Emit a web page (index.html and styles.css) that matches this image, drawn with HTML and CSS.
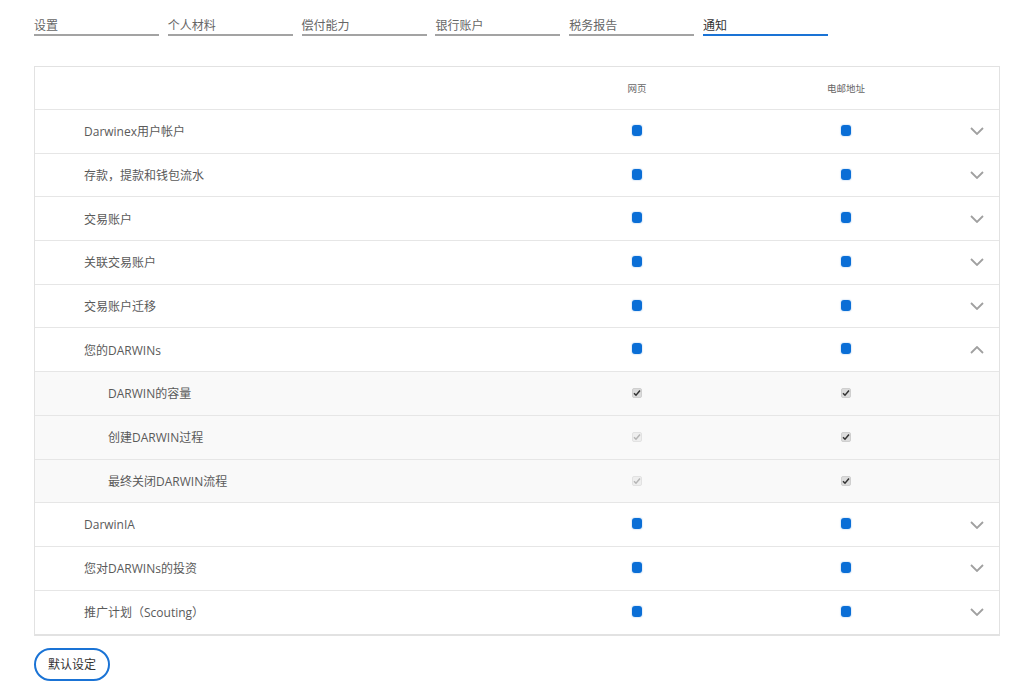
FILE: index.html
```html
<!DOCTYPE html>
<html lang="zh">
<head>
<meta charset="utf-8">
<link rel="stylesheet" href="styles.css">
</head>
<body>
<div class="page">
  <nav class="tabs">
    <div class="tab">设置</div>
    <div class="tab">个人材料</div>
    <div class="tab">偿付能力</div>
    <div class="tab">银行账户</div>
    <div class="tab">税务报告</div>
    <div class="tab active">通知</div>
  </nav>

  <div class="table">
    <div class="row head">
      <div class="label"></div>
      <div class="col c1 hlabel">网页</div>
      <div class="col c2 hlabel">电邮地址</div>
      <div class="chev"></div>
    </div>

    <div class="row">
      <div class="label">Darwinex用户帐户</div>
      <div class="col c1"><span class="dot"></span></div>
      <div class="col c2"><span class="dot"></span></div>
      <div class="chev"><svg width="14" height="8" viewBox="0 0 14 8"><polyline points="1,1 7,7 13,1"/></svg></div>
    </div>
    <div class="row">
      <div class="label">存款，提款和钱包流水</div>
      <div class="col c1"><span class="dot"></span></div>
      <div class="col c2"><span class="dot"></span></div>
      <div class="chev"><svg width="14" height="8" viewBox="0 0 14 8"><polyline points="1,1 7,7 13,1"/></svg></div>
    </div>
    <div class="row">
      <div class="label">交易账户</div>
      <div class="col c1"><span class="dot"></span></div>
      <div class="col c2"><span class="dot"></span></div>
      <div class="chev"><svg width="14" height="8" viewBox="0 0 14 8"><polyline points="1,1 7,7 13,1"/></svg></div>
    </div>
    <div class="row">
      <div class="label">关联交易账户</div>
      <div class="col c1"><span class="dot"></span></div>
      <div class="col c2"><span class="dot"></span></div>
      <div class="chev"><svg width="14" height="8" viewBox="0 0 14 8"><polyline points="1,1 7,7 13,1"/></svg></div>
    </div>
    <div class="row">
      <div class="label">交易账户迁移</div>
      <div class="col c1"><span class="dot"></span></div>
      <div class="col c2"><span class="dot"></span></div>
      <div class="chev"><svg width="14" height="8" viewBox="0 0 14 8"><polyline points="1,1 7,7 13,1"/></svg></div>
    </div>
    <div class="row">
      <div class="label">您的DARWINs</div>
      <div class="col c1"><span class="dot"></span></div>
      <div class="col c2"><span class="dot"></span></div>
      <div class="chev"><svg width="14" height="8" viewBox="0 0 14 8"><polyline points="1,7 7,1 13,7"/></svg></div>
    </div>

    <div class="row sub">
      <div class="label">DARWIN的容量</div>
      <div class="col c1"><span class="cb"><svg width="8" height="8" viewBox="0 0 8 8"><polyline points="1,4.2 3,6.2 7,1.6"/></svg></span></div>
      <div class="col c2"><span class="cb"><svg width="8" height="8" viewBox="0 0 8 8"><polyline points="1,4.2 3,6.2 7,1.6"/></svg></span></div>
      <div class="chev"></div>
    </div>
    <div class="row sub">
      <div class="label">创建DARWIN过程</div>
      <div class="col c1"><span class="cb off"><svg width="8" height="8" viewBox="0 0 8 8"><polyline points="1,4.2 3,6.2 7,1.6"/></svg></span></div>
      <div class="col c2"><span class="cb"><svg width="8" height="8" viewBox="0 0 8 8"><polyline points="1,4.2 3,6.2 7,1.6"/></svg></span></div>
      <div class="chev"></div>
    </div>
    <div class="row sub">
      <div class="label">最终关闭DARWIN流程</div>
      <div class="col c1"><span class="cb off"><svg width="8" height="8" viewBox="0 0 8 8"><polyline points="1,4.2 3,6.2 7,1.6"/></svg></span></div>
      <div class="col c2"><span class="cb"><svg width="8" height="8" viewBox="0 0 8 8"><polyline points="1,4.2 3,6.2 7,1.6"/></svg></span></div>
      <div class="chev"></div>
    </div>

    <div class="row">
      <div class="label">DarwinIA</div>
      <div class="col c1"><span class="dot"></span></div>
      <div class="col c2"><span class="dot"></span></div>
      <div class="chev"><svg width="14" height="8" viewBox="0 0 14 8"><polyline points="1,1 7,7 13,1"/></svg></div>
    </div>
    <div class="row">
      <div class="label">您对DARWINs的投资</div>
      <div class="col c1"><span class="dot"></span></div>
      <div class="col c2"><span class="dot"></span></div>
      <div class="chev"><svg width="14" height="8" viewBox="0 0 14 8"><polyline points="1,1 7,7 13,1"/></svg></div>
    </div>
    <div class="row last">
      <div class="label">推广计划（Scouting）</div>
      <div class="col c1"><span class="dot"></span></div>
      <div class="col c2"><span class="dot"></span></div>
      <div class="chev"><svg width="14" height="8" viewBox="0 0 14 8"><polyline points="1,1 7,7 13,1"/></svg></div>
    </div>
  </div>

  <button class="btn">默认设定</button>
</div>
</body>
</html>
```

FILE: styles.css
```css
* { box-sizing: border-box; }
html, body { margin: 0; padding: 0; background: #fff; }
body {
  font-family: "Open Sans", "Noto Sans CJK SC", sans-serif;
  font-size: 12px;
  color: #5a5a5a;
}
.page {
  padding: 14px 0 0 34px;
  width: 1000px;
}
.tabs {
  display: flex;
  gap: 8.8px;
}
.tab {
  width: 125px;
  height: 22px;
  padding-top: 3px;
  line-height: 17px;
  border-bottom: 2px solid #a3a3a3;
  color: #666;
  font-size: 12px;
}
.tab.active {
  color: #333;
  border-bottom-color: #1a73d5;
}
.table {
  margin-top: 30px;
  width: 966px;
  border: 1px solid #e2e2e2;
  border-bottom-width: 2px;
}
.row {
  display: grid;
  grid-template-columns: 542px 120px 89px 120px 1fr;
  align-items: center;
  height: 43.7px;
  border-bottom: 1px solid #e6e6e6;
}
.row.head { height: 43px; }
.row.last { border-bottom: none; height: 43px; }
.row .label {
  padding-left: 49px;
  grid-column: 1;
}
.row.sub { background: #f9f9f9; }
.row.sub .label { padding-left: 73px; }
.col {
  display: flex;
  justify-content: center;
  align-items: center;
}
.c1 { grid-column: 2; }
.c2 { grid-column: 4; }
.hlabel {
  font-size: 9.5px;
  color: #666;
}
.chev {
  grid-column: 5;
  display: flex;
  justify-content: flex-end;
  padding-right: 15px;
}
.chev svg polyline {
  fill: none;
  stroke: #a0a0a0;
  stroke-width: 1.8;
}
.dot {
  display: block;
  width: 10px;
  height: 11px;
  margin-top: -2px;
  border-radius: 3px;
  background: #0a6ed6;
  box-shadow: 0 0 1px 1px rgba(10, 110, 214, 0.12);
}
.cb {
  display: flex;
  align-items: center;
  justify-content: center;
  width: 10px;
  height: 10px;
  border-radius: 2px;
  background: #dcdcdc;
  border: 1px solid #cfcfcf;
}
.cb svg polyline {
  fill: none;
  stroke: #333;
  stroke-width: 1.5;
}
.cb.off { background: #eeeeee; border-color: #e2e2e2; }
.cb.off svg polyline { stroke: #b5b5b5; }
.btn {
  margin-top: 12px;
  width: 76px;
  height: 33px;
  border: 2px solid #1a73d5;
  border-radius: 17px;
  background: #fff;
  font-family: "Open Sans", "Noto Sans CJK SC", sans-serif;
  font-size: 12px;
  color: #333;
  padding: 0;
}
```
